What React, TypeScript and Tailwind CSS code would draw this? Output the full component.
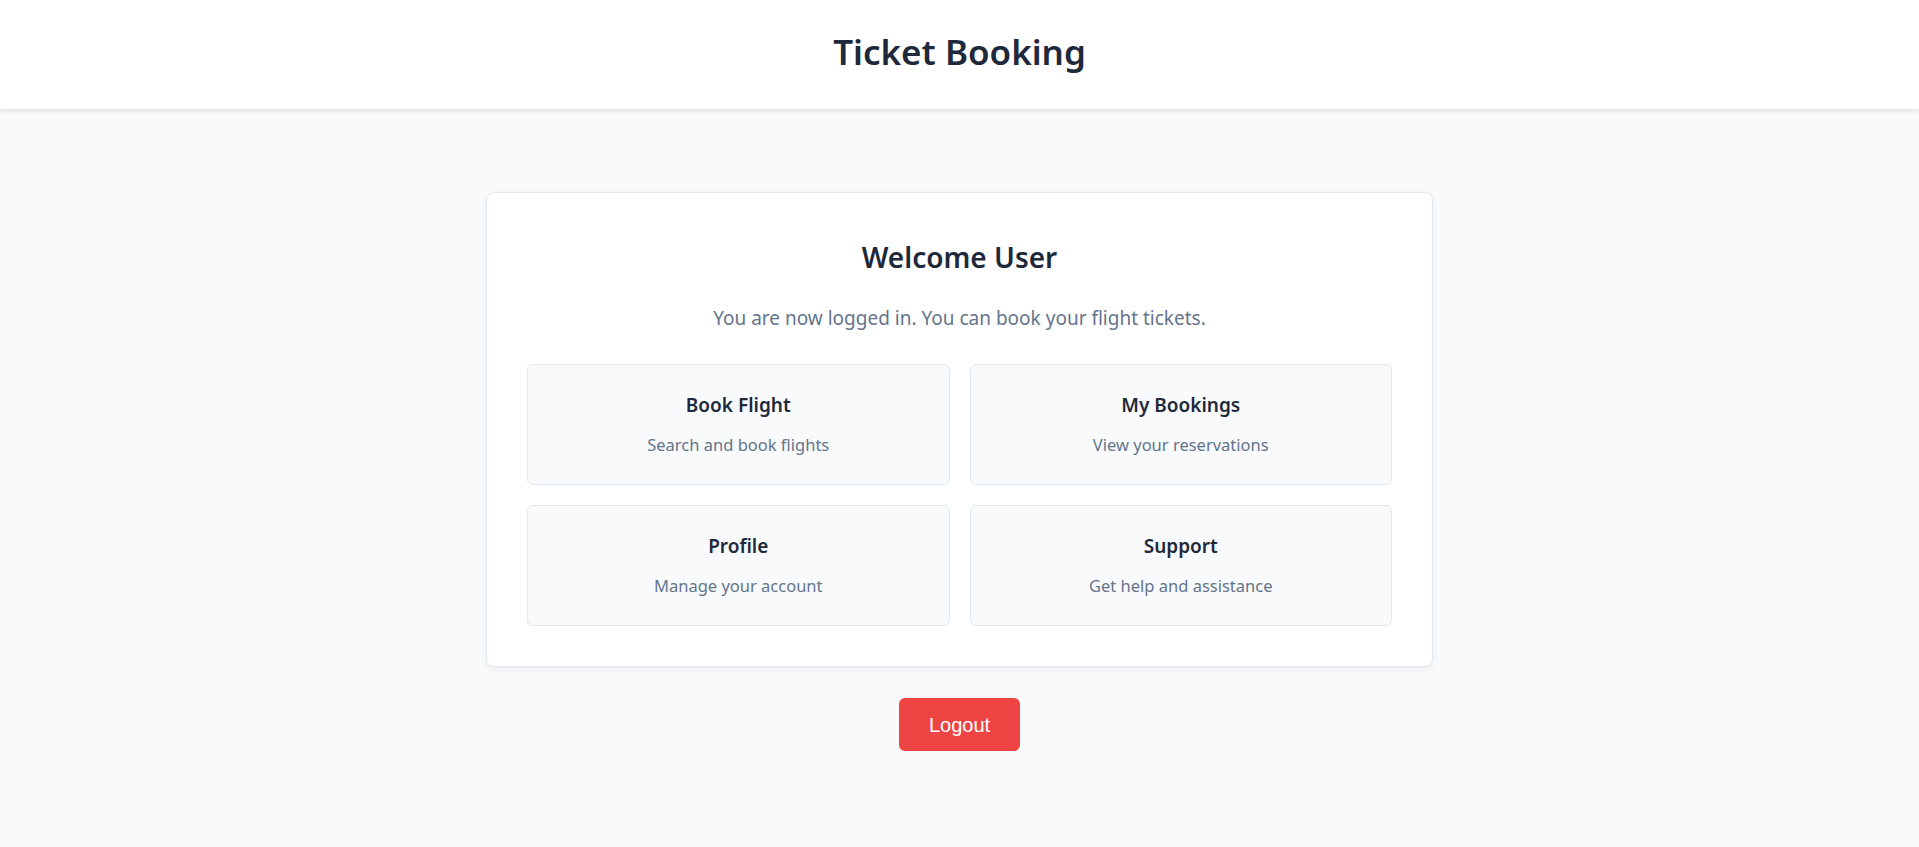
const tiles = [
  { title: 'Book Flight', text: 'Search and book flights' },
  { title: 'My Bookings', text: 'View your reservations' },
  { title: 'Profile', text: 'Manage your account' },
  { title: 'Support', text: 'Get help and assistance' },
];

export default function App() {
  return (
    <div className="min-h-screen bg-[#f8fafc] font-['Noto_Sans',sans-serif]">
      <header className="h-[110px] bg-white flex items-center justify-center shadow-[0_2px_4px_rgba(0,0,0,0.08)] border-b border-[#e5e7eb]">
        <h1 className="text-[35px] font-semibold text-[#1e293b] -mt-1">Ticket Booking</h1>
      </header>

      <main className="flex flex-col items-center pt-[82px]">
        <div className="w-[947px] bg-white rounded-lg border border-[#e2e8f0] shadow-[0_2px_6px_rgba(0,0,0,0.06)] px-10 pt-[48px] pb-[40px]">
          <h2 className="text-[28px] leading-[32px] font-semibold text-[#1e293b] text-center">Welcome User</h2>
          <p className="mt-[33px] text-[19px] leading-[24px] text-[#64748b] text-center">
            You are now logged in. You can book your flight tickets.
          </p>
          <div className="mt-[34px] grid grid-cols-2 gap-5">
            {tiles.map((t) => (
              <div
                key={t.title}
                className="h-[121px] rounded-md border border-[#e2e8f0] bg-[#f8fafc] flex flex-col items-center justify-center"
              >
                <h3 className="text-[19px] leading-[24px] font-semibold text-[#1e293b]">{t.title}</h3>
                <p className="mt-[17px] text-[16.5px] leading-[22px] text-[#64748b]">{t.text}</p>
              </div>
            ))}
          </div>
        </div>

        <button className="mt-[31px] h-[53px] px-[30px] rounded-md bg-[#ef4444] text-white text-[20px] font-['Liberation_Sans',Arial,sans-serif]">
          Logout
        </button>
      </main>
    </div>
  );
}
